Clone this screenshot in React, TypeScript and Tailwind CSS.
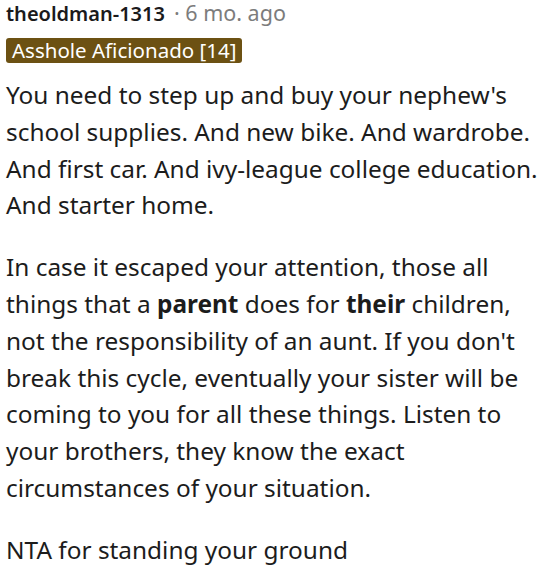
export default function App() {
  return (
    <div className="w-[546px] h-[570px] bg-white pl-[6px] pr-[4px] overflow-hidden font-['Noto_Sans',sans-serif] text-[#1c1c1c]">
      <div className="flex items-baseline leading-[26px]">
        <span className="text-[20px] font-semibold text-[#1a1a1b]">theoldman-1313</span>
        <span className="text-[21.5px] text-[#7c7c7c] ml-[9px]">· 6 mo. ago</span>
      </div>
      <div className="mt-[11px] inline-flex items-center h-[25px] px-[6px] rounded-[3px] bg-[#6c5113] text-white text-[20.5px] leading-[25px]">
        Asshole Aficionado [14]
      </div>
      <div className="mt-[13px] text-[24.4px] leading-[36.8px]">
        <p>
          You need to step up and buy your nephew's school supplies. And new
          bike. And wardrobe. And first car. And ivy-league college education.
          And starter home.
        </p>
        <p className="mt-[25px]">
          In case it escaped your attention, those all things that a{" "}
          <strong className="font-bold">parent</strong> does for{" "}
          <strong className="font-bold">their</strong> children, not the
          responsibility of an aunt. If you don't break this cycle, eventually
          your sister will be coming to you for all these things. Listen to your
          brothers, they know the exact circumstances of your situation.
        </p>
        <p className="mt-[25px]">NTA for standing your ground</p>
      </div>
    </div>
  );
}
